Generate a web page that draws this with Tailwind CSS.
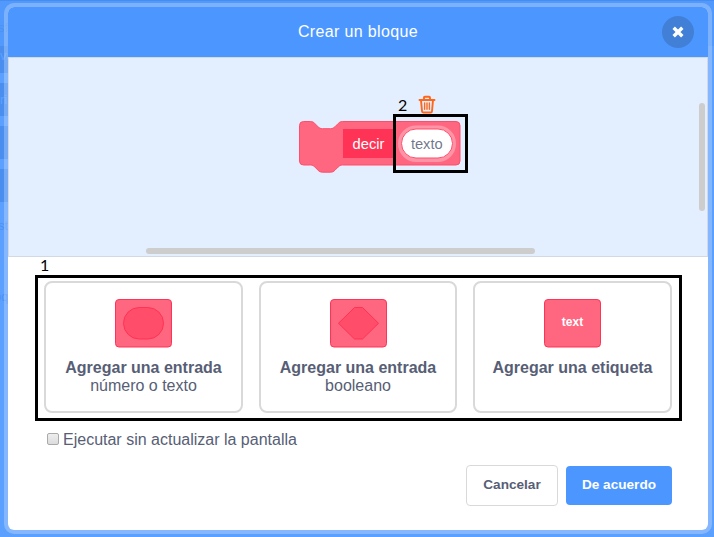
<!DOCTYPE html>
<html lang="es">
<head>
<meta charset="utf-8">
<title>Crear un bloque</title>
<script src="https://cdn.jsdelivr.net/npm/@tailwindcss/browser@4"></script>
</head>
<body class="relative h-[537px] w-[714px] overflow-hidden bg-[#5b9fff] font-['Liberation_Sans',Arial,sans-serif] text-[#575e75]">
<!-- dimmed editor behind the modal -->
<div class="absolute inset-0 overflow-hidden text-[13px] leading-[16px] text-[#4b91f5]">
  <div class="absolute inset-x-0 top-0 h-[46px] bg-[#5199fc]"></div>
  <div class="absolute inset-x-0 top-0 h-px bg-[#478df0]"></div>
  <div class="absolute left-0 top-[46px] h-[27px] w-2 bg-[#4a8ff0]"></div>
  <div class="absolute left-0 top-[83px] h-[33px] w-2 bg-[#4a8ff0]"></div>
  <div class="absolute left-0 top-[126px] h-[33px] w-2 bg-[#4a8ff0]"></div>
  <div class="absolute left-0 top-[169px] h-[33px] w-2 bg-[#4a8ff0]"></div>
  <span class="absolute left-[-2px] top-[20px]">sf</span>
  <span class="absolute left-0 top-[48px] text-[#5b9fff]">va</span>
  <span class="absolute left-0 top-[92px] text-[#5b9fff]">ria</span>
  <span class="absolute left-[-2px] top-[218px]">sta</span>
  <span class="absolute left-[-6px] top-[289px]">oq</span>
</div>

<main class="absolute left-1 top-[3px] flex h-[531px] w-[708px] flex-col overflow-hidden rounded-[10px] border-4 border-white/25 bg-white bg-clip-padding">
  <header class="relative flex h-[50px] shrink-0 items-center justify-center bg-[#4c97ff]">
    <h1 class="text-[16px] leading-[18px] tracking-[0.36px] text-white">Crear un bloque</h1>
    <button class="absolute right-[14px] top-[9px] flex size-8 items-center justify-center rounded-full bg-[#4280d7]" aria-label="Cerrar">
      <svg width="12" height="12" viewBox="0 0 12 12" stroke="#fff" stroke-width="3.400" stroke-linecap="butt"><path d="M1.700 1.700l8.600 8.600M10.300 1.700L1.700 10.300"/></svg>
    </button>
  </header>

  <section class="relative h-[200px] shrink-0 border border-[#d0d9e4] bg-[#e3efff]">
    <svg class="absolute left-[289px] top-[61px]" width="164" height="56" viewBox="298 119 164 56">
      <path d="M299.5 125.500a4 4 0 0 1 4-4h7c2 0 3 .7 4.300 2l3.200 3.200c1.200 1.200 2.500 2 4.500 2h8c2 0 3.300-.8 4.500-2l3.200-3.200c1.300-1.300 2.300-2 4.300-2H456a4 4 0 0 1 4 4V161a4 4 0 0 1-4 4H342.500c-2 0-3 .7-4.300 2l-3.200 3.200c-1.200 1.200-2.500 2-4.500 2h-8c-2 0-3.300-.8-4.500-2l-3.200-3.200c-1.300-1.300-2.300-2-4.300-2h-7a4 4 0 0 1-4-4z" fill="#ff6680" stroke="#ff4d6a"/>
      <rect x="343" y="129" width="52" height="29" fill="#ff3355"/>
      <rect x="400" y="127.500" width="54" height="32.500" rx="16.250" fill="#fff" stroke="#ff94a6" stroke-width="4"/>
      <rect x="401.500" y="129" width="51" height="29" rx="14.500" fill="#fff" stroke="#ff4d6a"/>
      <g font-family="Liberation Sans, Arial, sans-serif" font-size="14.700" text-anchor="middle">
        <text x="368.500" y="149" fill="#fff">decir</text>
        <text x="426.800" y="149" fill="#575e75" fill-opacity=".85">texto</text>
      </g>
    </svg>
    <svg class="absolute left-[409px] top-[37px]" width="18" height="19" viewBox="0 0 18 19" fill="none" stroke="#ff661a" stroke-linecap="round" stroke-linejoin="round"><path d="M1.500 5h15M6 4.500V2.700q0-.9.900-.9h4.200q.9 0 .9.900v1.800M3 5.200l1 11q.1 1.300 1.300 1.300h7.400q1.200 0 1.300-1.300l1-11" stroke-width="1.900"/><path d="M6.600 8v6.200M9 8v6.200M11.400 8v6.200" stroke-width="1.400"/></svg>
    <span class="absolute left-[389px] top-[37px] font-['Lato',sans-serif] text-[16px] leading-[20px] text-black">2</span>
    <div class="absolute left-[384px] top-[56px] h-[59px] w-[75px] border-3 border-black"></div>
    <div class="absolute right-[2px] top-[45px] h-[108px] w-[6px] rounded-full bg-[#cecdce]"></div>
    <div class="absolute bottom-[2px] left-[137px] h-[6px] w-[389px] rounded-full bg-[#cecdce]"></div>
  </section>

  <section class="relative flex flex-1 flex-col">
    <span class="absolute left-8 top-[-2px] font-['Lato',sans-serif] text-[16px] leading-[20px] text-black">1</span>
    <div class="ml-[27px] mt-[18px] flex h-[146px] w-[647px] gap-4 border-3 border-black px-[6px] py-[3px]">
      <button class="flex h-[132px] w-[199px] flex-col items-center rounded-lg border-2 border-[#d9d9d9] pt-[16px] text-[16px] leading-[18px]">
        <svg width="57" height="49" viewBox="0 0 57 49" fill="#ff6680" stroke="#ff3355"><rect x=".5" y=".5" width="56" height="47.500" rx="3.500"/><rect x="8.500" y="8.500" width="40" height="31.500" rx="15.750" fill="#ff4d6a"/></svg>
        <b class="mt-[11px]">Agregar una entrada</b><span>número o texto</span>
      </button>
      <button class="flex h-[132px] w-[198px] flex-col items-center rounded-lg border-2 border-[#d9d9d9] pt-[16px] text-[16px] leading-[18px]">
        <svg width="57" height="49" viewBox="0 0 57 49" fill="#ff6680" stroke="#ff3355"><rect x=".5" y=".5" width="56" height="47.500" rx="3.500"/><path d="M8.500 24.300L24.500 8.500h8l16 15.800L32.500 40h-8z" fill="#ff4d6a"/></svg>
        <b class="mt-[11px]">Agregar una entrada</b><span>booleano</span>
      </button>
      <button class="flex h-[132px] w-[199px] flex-col items-center rounded-lg border-2 border-[#d9d9d9] pt-[16px] text-[16px] leading-[18px]">
        <svg width="57" height="49" viewBox="0 0 57 49"><rect x=".5" y=".5" width="56" height="47.500" rx="3.500" fill="#ff6680" stroke="#ff3355"/><text x="28.500" y="27" fill="#fff" text-anchor="middle" font-family="Liberation Sans, Arial, sans-serif" font-size="12" font-weight="700">text</text></svg>
        <b class="mt-[11px]">Agregar una etiqueta</b>
      </button>
    </div>
    <label class="ml-[39px] mt-[9px] flex h-[20px] items-center text-[16px] leading-[18px]">
      <span class="-mt-[3px] mr-1 h-[12px] w-[12px] rounded-[2px] border border-[#aaa] bg-linear-to-b from-[#eee] to-[#dcdcdc]"></span>Ejecutar sin actualizar la pantalla
    </label>
    <div class="mr-[36px] mt-[15px] flex items-center justify-end gap-2 text-[13.6px] font-bold">
      <button class="h-[41px] w-[92px] rounded-[4px] border border-[#d9d9d9] pb-px">Cancelar</button>
      <button class="h-[39px] w-[106px] rounded-[4px] bg-[#4c97ff] pb-px text-white">De acuerdo</button>
    </div>
  </section>
</main>
</body>
</html>
